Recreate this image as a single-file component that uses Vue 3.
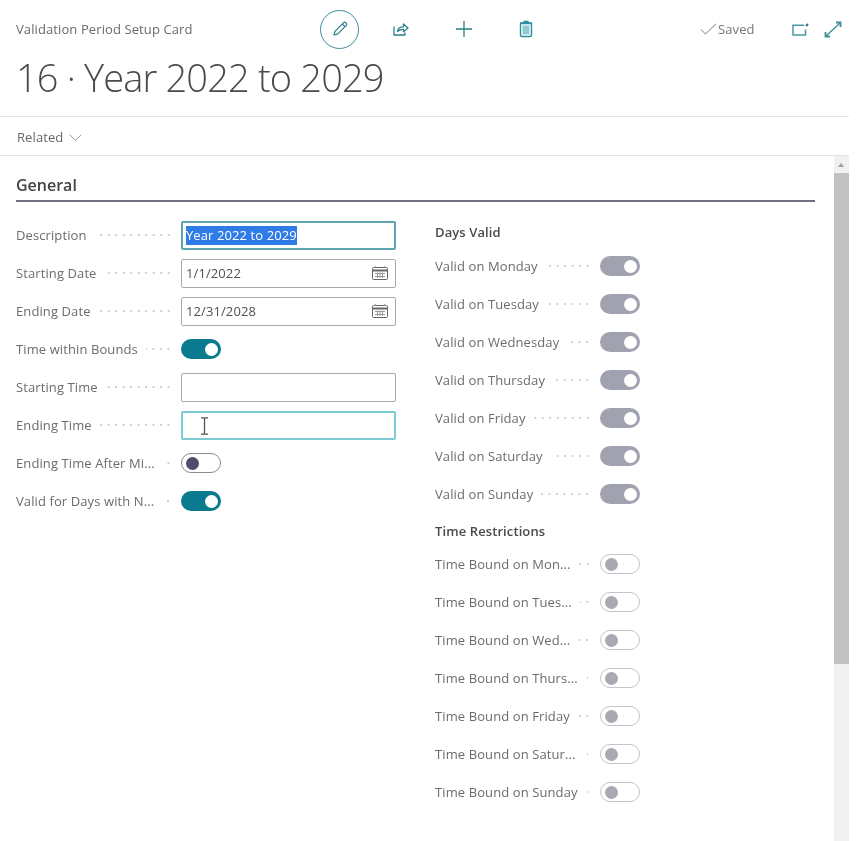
<script setup>
const daysValid = ['Valid on Monday', 'Valid on Tuesday', 'Valid on Wednesday', 'Valid on Thursday', 'Valid on Friday', 'Valid on Saturday', 'Valid on Sunday']
const timeBound = ['Time Bound on Mon...', 'Time Bound on Tues...', 'Time Bound on Wed...', 'Time Bound on Thurs...', 'Time Bound on Friday', 'Time Bound on Satur...', 'Time Bound on Sunday']
</script>

<template>
  <div class="page">
    <header class="top">
      <span class="crumb">Validation Period Setup Card</span>
      <div class="actions">
        <button class="circle" aria-label="Edit">
          <svg width="18" height="18" viewBox="0 0 18 18" fill="none" stroke="#2b7f8c" stroke-width="1.2" stroke-linejoin="round"><path d="M3 15l.9-3.6L12.6 2.7a1.5 1.5 0 0 1 2.1 0l.6.6a1.5 1.5 0 0 1 0 2.1L6.6 14.1 3 15z"/><path d="M11.3 4l2.7 2.7"/></svg>
        </button>
        <svg class="ic-share" width="18" height="18" viewBox="0 0 18 18" fill="none" stroke="#2b7f8c" stroke-width="1.3" stroke-linejoin="round"><path d="M2 6.5V15h11v-2.5"/><path d="M5.5 11.5c.3-3 2.4-4.7 6-4.7V4l4.5 4-4.5 3.7V9.3c-2.6 0-4.6.6-6 2.2z"/></svg>
        <svg class="ic-plus" width="18" height="18" viewBox="0 0 18 18" fill="none" stroke="#2b7f8c" stroke-width="1.3"><path d="M9 1v16M1 9h16"/></svg>
        <svg class="ic-trash" width="16" height="18" viewBox="0 0 16 18" fill="none" stroke="#2b8f9c" stroke-width="1.4" stroke-linejoin="round"><path d="M2.5 3.5h11V15a1.5 1.5 0 0 1-1.5 1.5H4A1.5 1.5 0 0 1 2.5 15V3.5z"/><path d="M2 3h12M6 3V1.5h4V3"/><rect x="4.5" y="5.5" width="7" height="9" fill="#93c9d0" stroke="none"/></svg>
      </div>
      <div class="status">
        <svg width="17" height="12" viewBox="0 0 17 12" fill="none" stroke="#777" stroke-width="1"><path d="M1 6.5L5.5 11 16 .8"/></svg>
        <span>Saved</span>
      </div>
      <div class="win">
        <svg width="17" height="13" viewBox="0 0 17 13" fill="none" stroke="#4a96a2" stroke-width="1.5"><path d="M12 2.2H1V12h12.5V6.5"/><path d="M14 3L16 1" stroke="#2b6f7c" stroke-width="2"/></svg>
        <svg width="18" height="17" viewBox="0 0 18 17" fill="none" stroke="#3b8a97" stroke-width="1.3"><path d="M2 15L16 2"/><path d="M12 1.5h4.5V6M1.5 11v4.5H6" stroke-width="1.8"/></svg>
      </div>
    </header>

    <h1 class="title">16 · Year 2022 to 2029</h1>

    <nav class="related">
      <span>Related</span>
      <svg width="13" height="7" viewBox="0 0 13 7" fill="none" stroke="#999" stroke-width="1"><path d="M.7.7l5.8 5.6L12.3.7"/></svg>
    </nav>

    <div class="content">
      <main class="scroll-body">
        <h2 class="section">General</h2>
        <div class="columns">
          <section class="col-left">
            <div class="row">
              <label class="lab"><span>Description</span><i class="dots"></i></label>
              <div class="input focus"><span class="sel">Year 2022 to 2029</span></div>
            </div>
            <div class="row">
              <label class="lab"><span>Starting Date</span><i class="dots"></i></label>
              <div class="input">
                <span>1/1/2022</span>
                <svg class="cal" width="16" height="14" viewBox="0 0 16 14" fill="none" stroke="#666" stroke-width="1"><rect x=".5" y="1.5" width="15" height="12" rx="1"/><path d="M.5 4.5h15" stroke-width="2"/><path d="M3.5 0v2M12.5 0v2M3 7.5h10M3 10.5h10M5.5 6.5v5.5M8 6.5v5.5M10.5 6.5v5.5" stroke="#999"/></svg>
              </div>
            </div>
            <div class="row">
              <label class="lab"><span>Ending Date</span><i class="dots"></i></label>
              <div class="input">
                <span>12/31/2028</span>
                <svg class="cal" width="16" height="14" viewBox="0 0 16 14" fill="none" stroke="#666" stroke-width="1"><rect x=".5" y="1.5" width="15" height="12" rx="1"/><path d="M.5 4.5h15" stroke-width="2"/><path d="M3.5 0v2M12.5 0v2M3 7.5h10M3 10.5h10M5.5 6.5v5.5M8 6.5v5.5M10.5 6.5v5.5" stroke="#999"/></svg>
              </div>
            </div>
            <div class="row">
              <label class="lab"><span>Time within Bounds</span><i class="dots"></i></label>
              <div class="toggle on"></div>
            </div>
            <div class="row">
              <label class="lab"><span>Starting Time</span><i class="dots"></i></label>
              <div class="input"></div>
            </div>
            <div class="row">
              <label class="lab"><span>Ending Time</span><i class="dots"></i></label>
              <div class="input focus light">
                <svg class="ibeam" width="9" height="18" viewBox="0 0 9 18" fill="none" stroke="#555" stroke-width="1.3"><path d="M1 .8h7M1 17.2h7M4.5 .8v16.4"/></svg>
              </div>
            </div>
            <div class="row">
              <label class="lab"><span>Ending Time After Mi...</span><i class="dots"></i></label>
              <div class="toggle off dark"></div>
            </div>
            <div class="row">
              <label class="lab"><span>Valid for Days with N...</span><i class="dots"></i></label>
              <div class="toggle on"></div>
            </div>
          </section>

          <section class="col-right">
            <h3 class="group">Days Valid</h3>
            <div v-for="d in daysValid" :key="d" class="row">
              <label class="lab"><span>{{ d }}</span><i class="dots"></i></label>
              <div class="toggle on muted"></div>
            </div>
            <h3 class="group second">Time Restrictions</h3>
            <div v-for="d in timeBound" :key="d" class="row">
              <label class="lab"><span>{{ d }}</span><i class="dots"></i></label>
              <div class="toggle off"></div>
            </div>
          </section>
        </div>
      </main>
      <aside class="scrollbar">
        <span class="arrow"></span>
        <div class="thumb"></div>
      </aside>
    </div>
  </div>
</template>

<style>
html, body { margin: 0; background: #fff; }
</style>

<style scoped>
.page {
  width: 849px;
  height: 841px;
  overflow: hidden;
  display: flex;
  flex-direction: column;
  font-family: "Open Sans", "Liberation Sans", sans-serif;
  color: #5f5f62;
  font-size: 13px;
  letter-spacing: .1px;
  background: #fff;
  filter: blur(.35px);
}
.top {
  height: 58px;
  flex: none;
  display: flex;
  align-items: center;
  padding-left: 16px;
  box-sizing: border-box;
}
.crumb { width: 304px; flex: none; color: #6a6a6a; white-space: nowrap; }
.actions { display: flex; align-items: center; }
.circle {
  width: 39px;
  height: 39px;
  box-sizing: border-box;
  border: 1px solid #3d8f9b;
  border-radius: 50%;
  background: #fff;
  padding: 0;
  display: flex;
  align-items: center;
  justify-content: center;
}
.ic-share { margin-left: 33px; }
.ic-plus { margin-left: 45px; }
.ic-trash { margin-left: 45px; }
.status {
  margin-left: 166px;
  display: flex;
  align-items: center;
  gap: 1px;
  color: #757575;
  width: 72px;
}
.win { display: flex; align-items: center; gap: 15px; margin-left: 20px; }
.title {
  margin: 0;
  padding-left: 16px;
  height: 58px;
  line-height: 38px;
  flex: none;
  font-size: 38px;
  font-weight: 300;
  color: #4a4a4a;
  letter-spacing: -.84px;
}
.related {
  flex: none;
  height: 40px;
  box-sizing: border-box;
  border-top: 1px solid #e4e4e4;
  border-bottom: 1px solid #e4e4e4;
  display: flex;
  align-items: center;
  gap: 6px;
  padding-left: 17px;
  padding-top: 2px;
  color: #666;
}
.content { flex: 1; display: flex; min-height: 0; }
.scroll-body { flex: 1; padding-left: 16px; padding-right: 19px; min-width: 0; }
.section {
  margin: 0;
  height: 46px;
  box-sizing: border-box;
  border-bottom: 2px solid #71707f;
  padding-top: 19px;
  line-height: 20px;
  font-size: 16px;
  font-weight: 600;
  color: #444;
  letter-spacing: 0;
}
.columns { display: flex; padding-top: 14px; }
.col-left { width: 380px; flex: none; margin-right: 39px; }
.col-right { width: 205px; flex: none; margin-top: 1px; }
.row { display: flex; align-items: center; height: 38px; }
.lab {
  width: 156px;
  margin-right: 9px;
  flex: none;
  display: flex;
  align-items: center;
  gap: 8px;
  white-space: nowrap;
  color: #6c6c70;
}
.dots {
  flex: 1;
  min-width: 0;
  height: 2px;
  background-image: radial-gradient(circle, #cfcfcf .7px, transparent .8px);
  background-size: 7.5px 2px;
  background-position: right center;
}
.input {
  width: 215px;
  height: 29px;
  box-sizing: border-box;
  border: 1px solid #a9a9a9;
  border-radius: 2px;
  display: flex;
  align-items: center;
  justify-content: space-between;
  padding: 0 7px 0 4px;
  color: #505050;
  position: relative;
}
.input.focus { border: 2px solid #5fa5b1; padding-left: 3px; }
.input.focus.light { border-color: #7ccad3; }
.sel { background: #2f7ce6; color: #fff; line-height: 19px; }
.ibeam { position: absolute; left: 17px; top: 4px; }
.toggle {
  width: 40px;
  height: 20px;
  box-sizing: border-box;
  border-radius: 10px;
  position: relative;
  flex: none;
}
.toggle::after {
  content: "";
  position: absolute;
  width: 13px;
  height: 13px;
  border-radius: 50%;
  top: 2.5px;
}
.toggle.on { background: #0a7a8f; }
.toggle.on::after { background: #fff; right: 3px; top: 3.5px; }
.toggle.on.muted { background: #a0a2b0; }
.toggle.off { border: 1px solid #c4c4c8; background: #fff; }
.toggle.off::after { background: #a9a9b4; left: 4px; }
.toggle.off.dark { border-color: #8a8a90; }
.toggle.off.dark::after { background: #4c4e6a; }
.group {
  margin: 0;
  height: 30px;
  line-height: 30px;
  font-size: 13px;
  font-weight: 600;
  color: #4a4a4a;
}
.group.second { height: 29px; margin-top: 3px; line-height: 30px; }
.scrollbar {
  width: 15px;
  flex: none;
  background: #f1f1f1;
  position: relative;
  padding-top: 17px;
  box-sizing: border-box;
}
.arrow {
  position: absolute;
  top: 7px;
  left: 4px;
  border-left: 3.5px solid transparent;
  border-right: 3.5px solid transparent;
  border-bottom: 4px solid #a0a0a0;
}
.thumb { height: 491px; background: #c1c1c1; }
</style>
